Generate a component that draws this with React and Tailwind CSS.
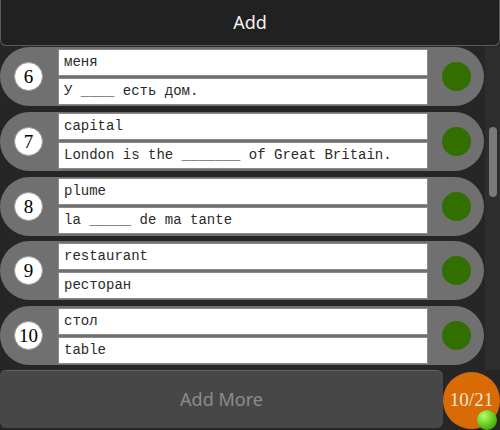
import React from 'react';

const rows = [
  { n: 6, word: 'меня', sentence: 'У ____ есть дом.' },
  { n: 7, word: 'capital', sentence: 'London is the _______ of Great Britain.' },
  { n: 8, word: 'plume', sentence: 'la _____ de ma tante' },
  { n: 9, word: 'restaurant', sentence: 'ресторан' },
  { n: 10, word: 'стол', sentence: 'table' },
];

function Field({ children }) {
  return (
    <div className="h-[27px] bg-white border border-[#8a8a8a] flex items-center pl-[5px] text-[14px] text-[#2a2a2a] whitespace-pre font-['Liberation_Mono',monospace]">
      {children}
    </div>
  );
}

function Row({ item }) {
  return (
    <div className="h-[59px] w-[484px] rounded-[30px] bg-[#707070] flex items-center pl-[14px] pr-[13px] shrink-0">
      <div className="w-[29px] h-[29px] rounded-full bg-white border border-[#999] flex items-center justify-center text-[19px] text-black font-['Liberation_Serif',serif] leading-none shrink-0">
        {item.n}
      </div>
      <div className="ml-[15px] w-[370px] flex flex-col gap-[2px]">
        <Field>{item.word}</Field>
        <Field>{item.sentence}</Field>
      </div>
      <div className="ml-[14px] w-[29px] h-[29px] rounded-full bg-[#336e00] shrink-0" />
    </div>
  );
}

export default function App() {
  return (
    <div className="w-[500px] h-[430px] bg-[#262626] relative overflow-hidden flex flex-col font-['Noto_Sans',sans-serif]">
      {/* Header */}
      <div className="h-[46px] shrink-0 bg-[#212121] border border-t-0 border-[#5a5a5a] rounded-b-[6px] flex items-center justify-center text-[18px] text-[#f2f2f2]">
        Add
      </div>

      {/* List + scrollbar */}
      <div className="flex h-[324px] overflow-hidden">
        <div className="flex-1 flex flex-col gap-[5.75px] pt-[1px]">
          {rows.map((r) => (
            <Row key={r.n} item={r} />
          ))}
        </div>
        <div className="w-[15px] bg-[#2d2d2d] relative">
          <div className="absolute left-[4px] top-[81px] w-[8px] h-[70px] rounded-full bg-[#7a7a7a]" />
        </div>
      </div>

      {/* Footer */}
      <div className="flex h-[58px]">
        <div className="w-[443px] h-[58px] bg-[#474747] border-t border-[#626262] rounded-[6px] flex items-center justify-center text-[18px] text-[#8c8c8c]">
          Add More
        </div>
      </div>

      {/* Counter badge */}
      <div className="absolute left-[443px] top-[372px] w-[57px] h-[57px] rounded-full bg-[#d86b05] flex items-center justify-center text-[19px] text-[#f6e6d4] font-['Liberation_Serif',serif]">
        10/21
      </div>
      <div className="absolute left-[477px] top-[410px] w-[20px] h-[20px] rounded-full bg-[radial-gradient(circle_at_35%_30%,#b6ff6a,#5cc21a_55%,#2f8a00)]" />
    </div>
  );
}
